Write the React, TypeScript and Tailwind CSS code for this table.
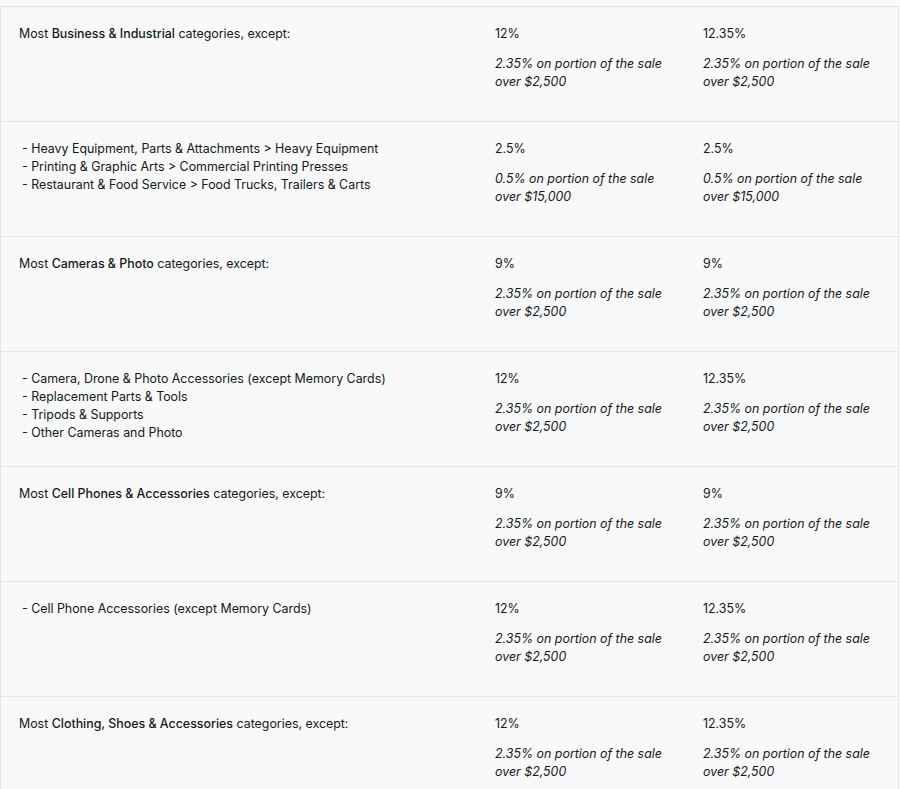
const fee = (rate: string, extra: string, over: string) => ({ rate, extra, over })

interface Row {
  label: React.ReactNode
  std: { rate: string; extra: string; over: string }
  top: { rate: string; extra: string; over: string }
}

const lead = (bold: string) => (
  <>
    Most <span className="font-medium">{bold}</span> categories, except:
  </>
)

const list = (items: string[]) => (
  <div className="ml-[3px]">
    {items.map((item) => (
      <div key={item}>- {item}</div>
    ))}
  </div>
)

const rows: Row[] = [
  {
    label: lead('Business & Industrial'),
    std: fee('12%', '2.35%', '$2,500'),
    top: fee('12.35%', '2.35%', '$2,500'),
  },
  {
    label: list([
      'Heavy Equipment, Parts & Attachments > Heavy Equipment',
      'Printing & Graphic Arts > Commercial Printing Presses',
      'Restaurant & Food Service > Food Trucks, Trailers & Carts',
    ]),
    std: fee('2.5%', '0.5%', '$15,000'),
    top: fee('2.5%', '0.5%', '$15,000'),
  },
  {
    label: lead('Cameras & Photo'),
    std: fee('9%', '2.35%', '$2,500'),
    top: fee('9%', '2.35%', '$2,500'),
  },
  {
    label: list([
      'Camera, Drone & Photo Accessories (except Memory Cards)',
      'Replacement Parts & Tools',
      'Tripods & Supports',
      'Other Cameras and Photo',
    ]),
    std: fee('12%', '2.35%', '$2,500'),
    top: fee('12.35%', '2.35%', '$2,500'),
  },
  {
    label: lead('Cell Phones & Accessories'),
    std: fee('9%', '2.35%', '$2,500'),
    top: fee('9%', '2.35%', '$2,500'),
  },
  {
    label: list(['Cell Phone Accessories (except Memory Cards)']),
    std: fee('12%', '2.35%', '$2,500'),
    top: fee('12.35%', '2.35%', '$2,500'),
  },
  {
    label: lead('Clothing, Shoes & Accessories'),
    std: fee('12%', '2.35%', '$2,500'),
    top: fee('12.35%', '2.35%', '$2,500'),
  },
]

function FeeCell({ rate, extra, over }: { rate: string; extra: string; over: string }) {
  return (
    <div className="px-[18px] pt-[18px]">
      <div>{rate}</div>
      <div className="mt-3 italic whitespace-nowrap">
        {extra} on portion of the sale
        <br />
        over {over}
      </div>
    </div>
  )
}

export default function App() {
  return (
    <div
      className="min-h-screen bg-[#f9f9f9] text-[12.4px] leading-[18px] text-[#111820]"
      style={{ fontFamily: 'Inter, "Liberation Sans", sans-serif' }}
    >
      <div className="h-[6px]" />
      <div className="border-x border-[#e5e5e5] mr-[1px]">
        {rows.map((row, i) => (
          <div
            key={i}
            className="grid grid-cols-[476px_208px_1fr] h-[115px] border-t border-[#e5e5e5]"
          >
            <div className="px-[18px] pt-[18px]">{row.label}</div>
            <FeeCell {...row.std} />
            <FeeCell {...row.top} />
          </div>
        ))}
      </div>
    </div>
  )
}
